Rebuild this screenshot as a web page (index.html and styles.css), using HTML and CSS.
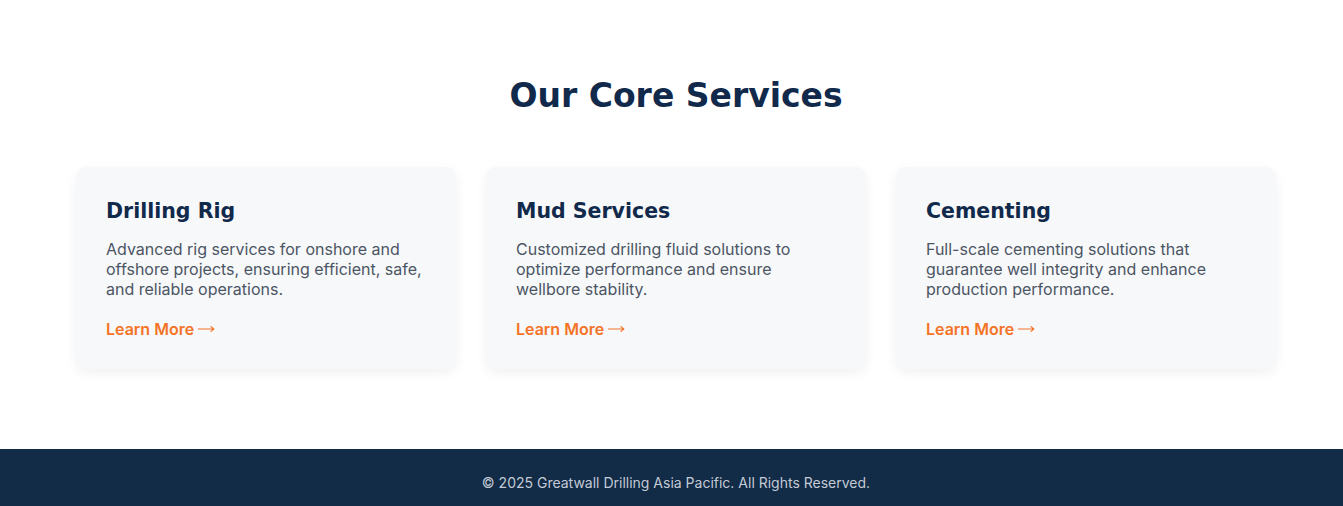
FILE: index.html
```html
<!DOCTYPE html>
<html lang="en">
<head>
<meta charset="utf-8">
<title>Our Core Services</title>
<link rel="stylesheet" href="styles.css">
</head>
<body>
<main class="services">
  <div class="container">
    <h2 class="services-title">Our Core Services</h2>
    <div class="service-grid">
      <article class="service-card">
        <h3 class="card-title">Drilling Rig</h3>
        <p class="card-text">Advanced rig services for onshore and offshore projects, ensuring efficient, safe, and reliable operations.</p>
        <a class="card-link" href="#">Learn More <svg class="arrow" width="17" height="10" viewBox="0 0 17 10" aria-hidden="true"><path d="M0.5 5H15.8M13 2.6L15.8 5L13 7.4" fill="none" stroke="currentColor" stroke-width="1.2" stroke-linecap="round" stroke-linejoin="round"/></svg></a>
      </article>
      <article class="service-card">
        <h3 class="card-title">Mud Services</h3>
        <p class="card-text">Customized drilling fluid solutions to optimize performance and ensure wellbore stability.</p>
        <a class="card-link" href="#">Learn More <svg class="arrow" width="17" height="10" viewBox="0 0 17 10" aria-hidden="true"><path d="M0.5 5H15.8M13 2.6L15.8 5L13 7.4" fill="none" stroke="currentColor" stroke-width="1.2" stroke-linecap="round" stroke-linejoin="round"/></svg></a>
      </article>
      <article class="service-card">
        <h3 class="card-title">Cementing</h3>
        <p class="card-text">Full-scale cementing solutions that guarantee well integrity and enhance production performance.</p>
        <a class="card-link" href="#">Learn More <svg class="arrow" width="17" height="10" viewBox="0 0 17 10" aria-hidden="true"><path d="M0.5 5H15.8M13 2.6L15.8 5L13 7.4" fill="none" stroke="currentColor" stroke-width="1.2" stroke-linecap="round" stroke-linejoin="round"/></svg></a>
      </article>
    </div>
  </div>
</main>
<footer class="site-footer">
  <p class="footer-text">© 2025 Greatwall Drilling Asia Pacific. All Rights Reserved.</p>
</footer>
</body>
</html>
```
FILE: styles.css
```css
* { box-sizing: border-box; }
html, body { margin: 0; padding: 0; }
body {
  font-family: Inter, "Liberation Sans", sans-serif;
  background: #ffffff;
  color: #4a5565;
}
.services {
  padding: 73px 0 80px 9px;
}
.container {
  width: 1200px;
  margin: 0 auto;
}
.services-title {
  margin: 0 0 48px;
  text-align: center;
  font-family: "DejaVu Sans", sans-serif;
  font-weight: 700;
  font-size: 33px;
  line-height: 46px;
  color: #11294a;
}
.service-grid {
  display: grid;
  grid-template-columns: repeat(3, 1fr);
  gap: 30px;
}
.service-card {
  background: #f7f8fa;
  border-radius: 10px;
  box-shadow: 0 4px 12px rgba(0, 0, 0, 0.06);
  padding: 30px 30px 29px;
  height: 202px;
}
.card-title {
  margin: 0 0 14px;
  font-family: "DejaVu Sans", sans-serif;
  font-weight: 700;
  font-size: 20.5px;
  line-height: 28px;
  color: #11294a;
}
.card-text {
  margin: 0 0 20px;
  font-size: 16px;
  line-height: 20px;
  color: #4b5563;
}
.card-link {
  display: inline-block;
  font-size: 16px;
  line-height: 20px;
  font-weight: 600;
  color: #f47326;
  text-decoration: none;
}
.arrow {
  vertical-align: 1px;
}
.site-footer {
  background: #122b46;
  padding: 25px 0 15px 9px;
  text-align: center;
}
.footer-text {
  margin: 0;
  font-size: 14px;
  line-height: 17px;
  color: #c3cad6;
}
```
